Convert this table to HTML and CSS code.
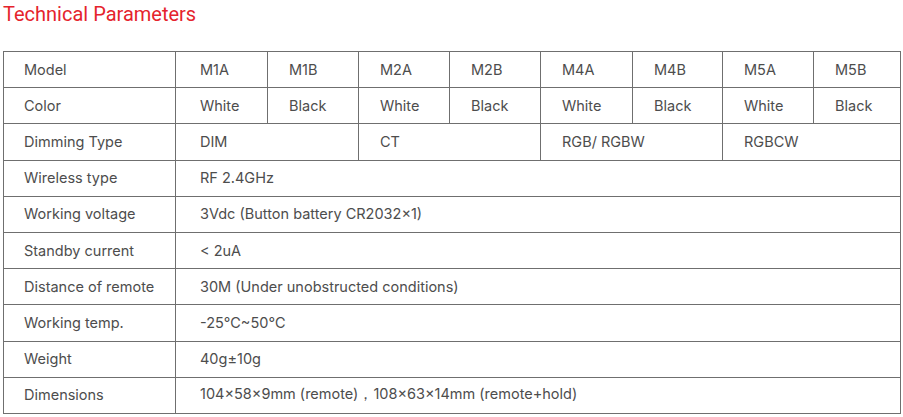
FILE: index.html
```html
<!DOCTYPE html>
<html lang="en">
<head>
<meta charset="utf-8">
<title>Technical Parameters</title>
<link rel="stylesheet" href="styles.css">
</head>
<body>
<h2 class="title">Technical Parameters</h2>
<table class="params">
  <colgroup>
    <col class="c-label">
    <col class="c-92"><col class="c-91"><col class="c-91"><col class="c-91">
    <col class="c-92"><col class="c-90"><col class="c-91"><col>
  </colgroup>
  <tbody>
    <tr>
      <td class="label">Model</td>
      <td class="m1">M1A</td><td>M1B</td><td>M2A</td><td>M2B</td>
      <td>M4A</td><td>M4B</td><td>M5A</td><td>M5B</td>
    </tr>
    <tr>
      <td class="label">Color</td>
      <td class="m1">White</td><td>Black</td><td>White</td><td>Black</td>
      <td>White</td><td>Black</td><td>White</td><td>Black</td>
    </tr>
    <tr>
      <td class="label">Dimming Type</td>
      <td colspan="2" class="m1">DIM</td>
      <td colspan="2">CT</td>
      <td colspan="2">RGB/ RGBW</td>
      <td colspan="2">RGBCW</td>
    </tr>
    <tr><td class="label">Wireless type</td><td colspan="8" class="m1">RF 2.4GHz</td></tr>
    <tr><td class="label">Working voltage</td><td colspan="8" class="m1">3Vdc (Button battery CR2032×1)</td></tr>
    <tr><td class="label">Standby current</td><td colspan="8" class="m1">&lt; 2uA</td></tr>
    <tr><td class="label">Distance of remote</td><td colspan="8" class="m1">30M (Under unobstructed conditions)</td></tr>
    <tr><td class="label">Working temp.</td><td colspan="8" class="m1">-25℃~50℃</td></tr>
    <tr><td class="label">Weight</td><td colspan="8" class="m1">40g±10g</td></tr>
    <tr><td class="label">Dimensions</td><td colspan="8" class="m1">104×58×9mm (remote)，108×63×14mm (remote+hold)</td></tr>
  </tbody>
</table>
</body>
</html>
```
FILE: styles.css
```css
html, body {
  margin: 0;
  padding: 0;
  background: #ffffff;
}
body {
  padding: 0 2px 0 3px;
  font-family: "Inter", "Liberation Sans", sans-serif;
  color: #4d4d4d;
}
.title {
  margin: 0;
  padding-top: 1px;
  height: 50px;
  font-family: "Roboto", "Liberation Sans", sans-serif;
  font-size: 20px;
  font-weight: 400;
  line-height: 26px;
  color: #e5232c;
}
.params {
  border-collapse: collapse;
  width: 898px;
  table-layout: fixed;
  font-size: 14.5px;
}
.c-label { width: 172px; }
.c-92 { width: 92px; }
.c-91 { width: 91px; }
.c-90 { width: 90px; }
.params td {
  border: 1px solid #6f6f6f;
  height: 34.2px;
  padding: 0 0 1px 21px;
  vertical-align: middle;
  white-space: nowrap;
}
.params td.label { padding-left: 20px; }
.params td.m1 { padding-left: 24px; }
```
